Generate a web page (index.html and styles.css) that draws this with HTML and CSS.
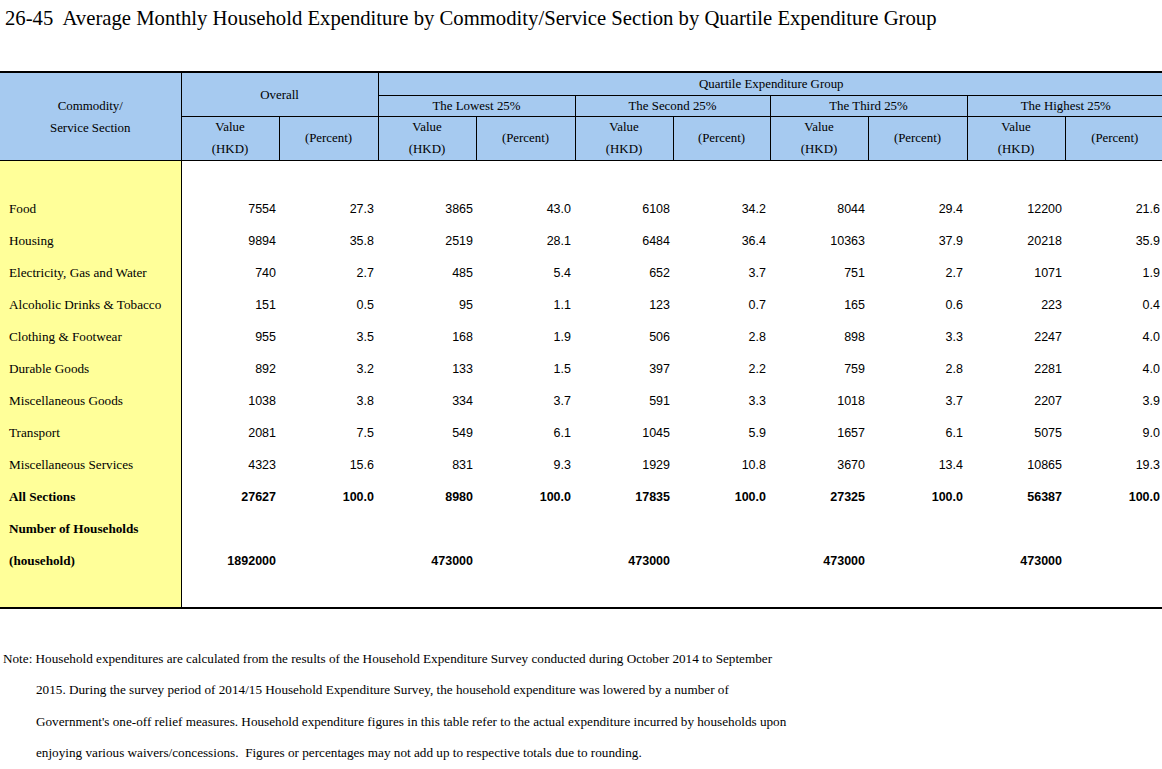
FILE: index.html
```html
<!DOCTYPE html>
<html lang="en">
<head>
<meta charset="utf-8">
<title>26-45 Average Monthly Household Expenditure</title>
<link rel="stylesheet" href="styles.css">
</head>
<body>
<h1 class="title">26-45&nbsp; Average Monthly Household Expenditure by Commodity/Service Section by Quartile Expenditure Group</h1>
<table class="tbl">
  <colgroup>
    <col class="c-lab">
    <col class="c-v"><col class="c-p">
    <col class="c-v"><col class="c-p">
    <col class="c-v"><col class="c-p2">
    <col class="c-v"><col class="c-p">
    <col class="c-v"><col class="c-p">
  </colgroup>
  <thead>
    <tr class="hr1">
      <th rowspan="3" class="sec">Commodity/<br>Service Section</th>
      <th colspan="2" rowspan="2">Overall</th>
      <th colspan="8">Quartile Expenditure Group</th>
    </tr>
    <tr class="hr2">
      <th colspan="2">The Lowest 25%</th>
      <th colspan="2">The Second 25%</th>
      <th colspan="2">The Third 25%</th>
      <th colspan="2">The Highest 25%</th>
    </tr>
    <tr class="hr3">
      <th>Value<br>(HKD)</th><th>(Percent)</th>
      <th>Value<br>(HKD)</th><th>(Percent)</th>
      <th>Value<br>(HKD)</th><th>(Percent)</th>
      <th>Value<br>(HKD)</th><th>(Percent)</th>
      <th>Value<br>(HKD)</th><th>(Percent)</th>
    </tr>
  </thead>
  <tbody>
    <tr class="gap"><td class="lab"></td><td colspan="10"></td></tr>
    <tr><td class="lab">Food</td><td class="v">7554</td><td class="p">27.3</td><td class="v">3865</td><td class="p">43.0</td><td class="v">6108</td><td class="p">34.2</td><td class="v">8044</td><td class="p">29.4</td><td class="v">12200</td><td class="p">21.6</td></tr>
    <tr><td class="lab">Housing</td><td class="v">9894</td><td class="p">35.8</td><td class="v">2519</td><td class="p">28.1</td><td class="v">6484</td><td class="p">36.4</td><td class="v">10363</td><td class="p">37.9</td><td class="v">20218</td><td class="p">35.9</td></tr>
    <tr><td class="lab">Electricity, Gas and Water</td><td class="v">740</td><td class="p">2.7</td><td class="v">485</td><td class="p">5.4</td><td class="v">652</td><td class="p">3.7</td><td class="v">751</td><td class="p">2.7</td><td class="v">1071</td><td class="p">1.9</td></tr>
    <tr><td class="lab">Alcoholic Drinks &amp; Tobacco</td><td class="v">151</td><td class="p">0.5</td><td class="v">95</td><td class="p">1.1</td><td class="v">123</td><td class="p">0.7</td><td class="v">165</td><td class="p">0.6</td><td class="v">223</td><td class="p">0.4</td></tr>
    <tr><td class="lab">Clothing &amp; Footwear</td><td class="v">955</td><td class="p">3.5</td><td class="v">168</td><td class="p">1.9</td><td class="v">506</td><td class="p">2.8</td><td class="v">898</td><td class="p">3.3</td><td class="v">2247</td><td class="p">4.0</td></tr>
    <tr><td class="lab">Durable Goods</td><td class="v">892</td><td class="p">3.2</td><td class="v">133</td><td class="p">1.5</td><td class="v">397</td><td class="p">2.2</td><td class="v">759</td><td class="p">2.8</td><td class="v">2281</td><td class="p">4.0</td></tr>
    <tr><td class="lab">Miscellaneous Goods</td><td class="v">1038</td><td class="p">3.8</td><td class="v">334</td><td class="p">3.7</td><td class="v">591</td><td class="p">3.3</td><td class="v">1018</td><td class="p">3.7</td><td class="v">2207</td><td class="p">3.9</td></tr>
    <tr><td class="lab">Transport</td><td class="v">2081</td><td class="p">7.5</td><td class="v">549</td><td class="p">6.1</td><td class="v">1045</td><td class="p">5.9</td><td class="v">1657</td><td class="p">6.1</td><td class="v">5075</td><td class="p">9.0</td></tr>
    <tr><td class="lab">Miscellaneous Services</td><td class="v">4323</td><td class="p">15.6</td><td class="v">831</td><td class="p">9.3</td><td class="v">1929</td><td class="p">10.8</td><td class="v">3670</td><td class="p">13.4</td><td class="v">10865</td><td class="p">19.3</td></tr>
    <tr class="bold"><td class="lab">All Sections</td><td class="v">27627</td><td class="p">100.0</td><td class="v">8980</td><td class="p">100.0</td><td class="v">17835</td><td class="p">100.0</td><td class="v">27325</td><td class="p">100.0</td><td class="v">56387</td><td class="p">100.0</td></tr>
    <tr class="bold"><td class="lab">Number of Households</td><td class="v"></td><td class="p"></td><td class="v"></td><td class="p"></td><td class="v"></td><td class="p"></td><td class="v"></td><td class="p"></td><td class="v"></td><td class="p"></td></tr>
    <tr class="bold"><td class="lab">(household)</td><td class="v">1892000</td><td class="p"></td><td class="v">473000</td><td class="p"></td><td class="v">473000</td><td class="p"></td><td class="v">473000</td><td class="p"></td><td class="v">473000</td><td class="p"></td></tr>
    <tr class="gap-end"><td class="lab"></td><td colspan="10"></td></tr>
  </tbody>
</table>
<p class="note">Note: Household expenditures are calculated from the results of the Household Expenditure Survey conducted during October 2014 to September<br>2015. During the survey period of 2014/15 Household Expenditure Survey, the household expenditure was lowered by a number of<br>Government's one-off relief measures. Household expenditure figures in this table refer to the actual expenditure incurred by households upon<br>enjoying various waivers/concessions.&nbsp; Figures or percentages may not add up to respective totals due to rounding.</p>
</body>
</html>
```

FILE: styles.css
```css
html, body {
  margin: 0;
  padding: 0;
  background: #ffffff;
  color: #000000;
}

body {
  font-family: "Liberation Serif", "Times New Roman", serif;
  width: 1162px;
}

.title {
  margin: 0;
  padding: 5px 0 0 5px;
  height: 71px;
  box-sizing: border-box;
  font-size: 20.7px;
  font-weight: normal;
  line-height: 26px;
  white-space: nowrap;
}

.tbl {
  width: 1162px;
  border-collapse: collapse;
  table-layout: fixed;
  border-top: 2px solid #000;
  border-bottom: 2px solid #000;
  font-size: 12.9px;
}

.c-lab { width: 181px; }
.c-v { width: 98px; }
.c-p { width: 99px; }
.c-p2 { width: 97px; }

.tbl th {
  background: #a6caf0;
  font-weight: normal;
  border: 1px solid #000;
  padding: 0;
  line-height: 22px;
  text-align: center;
  vertical-align: middle;
}

.tbl th:first-child { border-left: none; }
.tbl tr th:last-child { border-right: none; }
.tbl .sec { border-left: none; }

.hr1 th { height: 22px; }
.hr2 th { height: 20px; line-height: 20px; }
.hr3 th { height: 43px; line-height: 21.5px; }

.tbl td {
  padding: 0;
  height: 32px;
  line-height: 32px;
  white-space: nowrap;
  vertical-align: middle;
}

.tbl td.lab {
  background: #ffff99;
  border-right: 1px solid #000;
  padding-left: 9px;
  font-size: 13.2px;
  font-family: "Liberation Serif", "Times New Roman", serif;
}

.tbl td.v,
.tbl td.p {
  text-align: right;
  font-family: "Liberation Sans", Arial, sans-serif;
  font-size: 12.5px;
}

.tbl td.v { padding-right: 3px; }
.tbl td.p { padding-right: 4px; }

.tbl tr.gap td { height: 32px; }
.tbl tr.gap-end td { height: 30px; }

.tbl tr.bold td { font-weight: bold; }

.note {
  margin: 34px 0 0 0;
  padding-left: 36px;
  text-indent: -33px;
  font-size: 13.2px;
  line-height: 31.3px;
  white-space: nowrap;
}
```
